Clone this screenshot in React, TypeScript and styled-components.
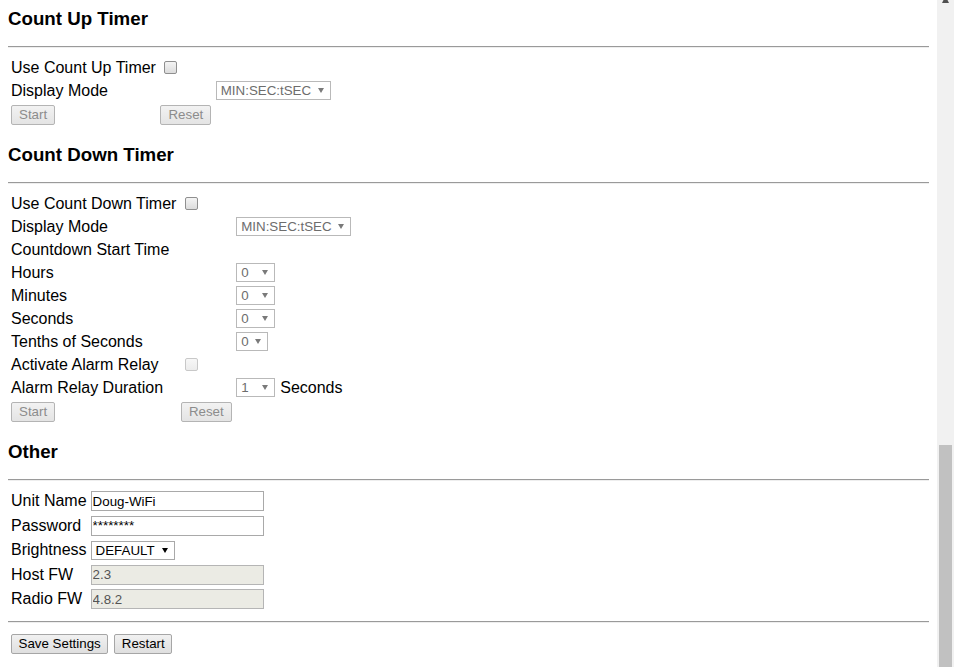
import React from "react";
import styled, { createGlobalStyle } from "styled-components";

const GlobalStyle = createGlobalStyle`
  html, body {
    margin: 0;
    padding: 0;
    height: 100%;
    overflow: hidden;
    background: #ffffff;
  }
  body {
    font-family: "Liberation Sans", Arial, sans-serif;
    color: #000000;
  }
  #root { height: 100%; }
`;

const Shell = styled.div`
  display: flex;
  height: 100vh;
`;

const Page = styled.main`
  flex: 1;
  min-width: 0;
  padding: 8px 8px 0;
  font-size: 16px;
`;

const SectionTitle = styled.h3<{ $first?: boolean }>`
  margin: ${(p) => (p.$first ? "0" : "18px")} 0 16px;
  font-size: 18.72px;
  line-height: 22px;
  font-weight: bold;
`;

const Rule = styled.hr<{ $top?: number; $bottom?: number }>`
  margin: ${(p) => p.$top ?? 0}px 0 ${(p) => p.$bottom ?? 8}px;
  height: 0;
  border: 0;
  border-top: 1px solid #9a9a9a;
  border-bottom: 1px solid #eeeeee;
`;

const TimerGrid = styled.div<{ $rows: number }>`
  display: grid;
  grid-template-columns: auto auto auto;
  grid-template-rows: repeat(${(p) => p.$rows}, 23px) 24px;
  column-gap: 4.5px;
  align-items: center;
  justify-content: start;
  padding-left: 3px;
`;

const OtherGrid = styled.div`
  display: grid;
  grid-template-columns: auto auto;
  grid-auto-rows: 24.5px;
  column-gap: 4px;
  align-items: center;
  justify-content: start;
  padding-left: 3px;
`;

const Cell = styled.div<{ $col: number; $buttons?: boolean }>`
  grid-column: ${(p) => p.$col};
  display: flex;
  align-items: center;
  gap: 5px;
  white-space: nowrap;
  margin-top: ${(p) => (p.$buttons ? "2px" : "0")};
`;

const Label = styled.span`
  font-size: 16px;
  line-height: 18px;
  white-space: nowrap;
`;

const CheckBox = styled.span<{ $disabled?: boolean }>`
  display: inline-block;
  box-sizing: border-box;
  width: 13px;
  height: 13px;
  margin-left: 4px;
  border: 1px solid ${(p) => (p.$disabled ? "#c8c8c8" : "#8f8f8f")};
  border-radius: 2px;
  background: ${(p) =>
    p.$disabled
      ? "linear-gradient(#f7f7f7, #ececec)"
      : "linear-gradient(#f4f4f4, #dcdcdc)"};
`;

const SelectBox = styled.div<{ $w: number; $disabled?: boolean }>`
  display: inline-flex;
  align-items: center;
  justify-content: space-between;
  box-sizing: border-box;
  width: ${(p) => p.$w}px;
  height: 19px;
  padding: 0 6px 0 4px;
  border: 1px solid ${(p) => (p.$disabled ? "#b9b9b9" : "#a9a9a9")};
  background: #ffffff;
  font-size: 13.33px;
  line-height: 17px;
  color: ${(p) => (p.$disabled ? "#6d6d6d" : "#000000")};
`;

const Arrow = styled.span<{ $disabled?: boolean }>`
  width: 0;
  height: 0;
  border-left: 3px solid transparent;
  border-right: 3px solid transparent;
  border-top: 5px solid ${(p) => (p.$disabled ? "#7a7a7a" : "#000000")};
`;

const Button = styled.button<{ $disabled?: boolean; $pad?: number }>`
  box-sizing: border-box;
  height: 20px;
  margin: 0;
  padding: 0 ${(p) => p.$pad ?? 7}px;
  font-family: "Liberation Sans", Arial, sans-serif;
  font-size: 13.33px;
  line-height: 18px;
  color: ${(p) => (p.$disabled ? "#8c8c8c" : "#000000")};
  border: 1px solid ${(p) => (p.$disabled ? "#b4b4b4" : "#a6a6a6")};
  border-radius: 2px;
  background: ${(p) =>
    p.$disabled
      ? "linear-gradient(#f2f2f2, #e4e4e4)"
      : "linear-gradient(#f1f1f1, #dfdfdf)"};
  white-space: nowrap;
`;

const TextField = styled.input<{ $disabled?: boolean }>`
  box-sizing: border-box;
  width: 173px;
  height: 20px;
  margin: 0;
  padding: 0 1px;
  border: 1px solid ${(p) => (p.$disabled ? "#b5b5b5" : "#a9a9a9")};
  font-family: "Liberation Sans", Arial, sans-serif;
  font-size: 13.33px;
  background: ${(p) => (p.$disabled ? "#ebebe4" : "#ffffff")};
  color: ${(p) => (p.$disabled ? "#545454" : "#000000")};
  outline: none;
`;

const Footer = styled.div`
  display: flex;
  gap: 6px;
  padding-left: 3px;
`;

const Scrollbar = styled.aside`
  flex: none;
  width: 17px;
  background: #f1f1f1;
  display: flex;
  flex-direction: column;
  align-items: center;
`;

const Thumb = styled.div`
  margin-top: auto;
  width: 13px;
  height: 222px;
  background: #c1c1c1;
`;

type SelectProps = { value: string; w: number; disabled?: boolean };

const Select: React.FC<SelectProps> = ({ value, w, disabled }) => (
  <SelectBox $w={w} $disabled={disabled}>
    <span>{value}</span>
    <Arrow $disabled={disabled} />
  </SelectBox>
);

const L: React.FC<{ children: React.ReactNode }> = ({ children }) => (
  <Cell $col={1}>
    <Label>{children}</Label>
  </Cell>
);

export default function App() {
  return (
    <Shell>
      <GlobalStyle />
      <Page>
        <SectionTitle $first>Count Up Timer</SectionTitle>
        <Rule />
        <TimerGrid $rows={2}>
          <L>Use Count Up Timer</L>
          <Cell $col={2}>
            <CheckBox />
          </Cell>
          <L>Display Mode</L>
          <Cell $col={3}>
            <Select value="MIN:SEC:tSEC" w={115} disabled />
          </Cell>
          <Cell $col={1} $buttons>
            <Button $disabled disabled>Start</Button>
          </Cell>
          <Cell $col={2} $buttons>
            <Button $disabled disabled>Reset</Button>
          </Cell>
        </TimerGrid>

        <SectionTitle>Count Down Timer</SectionTitle>
        <Rule />
        <TimerGrid $rows={9}>
          <L>Use Count Down Timer</L>
          <Cell $col={2}>
            <CheckBox />
          </Cell>
          <L>Display Mode</L>
          <Cell $col={3}>
            <Select value="MIN:SEC:tSEC" w={115} disabled />
          </Cell>
          <L>Countdown Start Time</L>
          <L>Hours</L>
          <Cell $col={3}>
            <Select value="0" w={39} disabled />
          </Cell>
          <L>Minutes</L>
          <Cell $col={3}>
            <Select value="0" w={39} disabled />
          </Cell>
          <L>Seconds</L>
          <Cell $col={3}>
            <Select value="0" w={39} disabled />
          </Cell>
          <L>Tenths of Seconds</L>
          <Cell $col={3}>
            <Select value="0" w={32} disabled />
          </Cell>
          <L>Activate Alarm Relay</L>
          <Cell $col={2}>
            <CheckBox $disabled />
          </Cell>
          <L>Alarm Relay Duration</L>
          <Cell $col={3}>
            <Select value="1" w={39} disabled />
            <Label>Seconds</Label>
          </Cell>
          <Cell $col={1} $buttons>
            <Button $disabled disabled>Start</Button>
          </Cell>
          <Cell $col={2} $buttons>
            <Button $disabled disabled>Reset</Button>
          </Cell>
        </TimerGrid>

        <SectionTitle>Other</SectionTitle>
        <Rule />
        <OtherGrid>
          <L>Unit Name</L>
          <Cell $col={2}>
            <TextField defaultValue="Doug-WiFi" />
          </Cell>
          <L>Password</L>
          <Cell $col={2}>
            <TextField defaultValue="********" />
          </Cell>
          <L>Brightness</L>
          <Cell $col={2}>
            <Select value="DEFAULT" w={84} />
          </Cell>
          <L>Host FW</L>
          <Cell $col={2}>
            <TextField $disabled disabled defaultValue="2.3" />
          </Cell>
          <L>Radio FW</L>
          <Cell $col={2}>
            <TextField $disabled disabled defaultValue="4.8.2" />
          </Cell>
        </OtherGrid>
        <Rule $top={9.5} $bottom={11} />
        <Footer>
          <Button $pad={6.5}>Save Settings</Button>
          <Button $pad={6.5}>Restart</Button>
        </Footer>
      </Page>
      <Scrollbar>
        <svg width="17" height="3" viewBox="0 0 17 3">
          <polygon points="5,3 12,3 10.5,0 6.5,0" fill="#505050" />
        </svg>
        <Thumb />
      </Scrollbar>
    </Shell>
  );
}
